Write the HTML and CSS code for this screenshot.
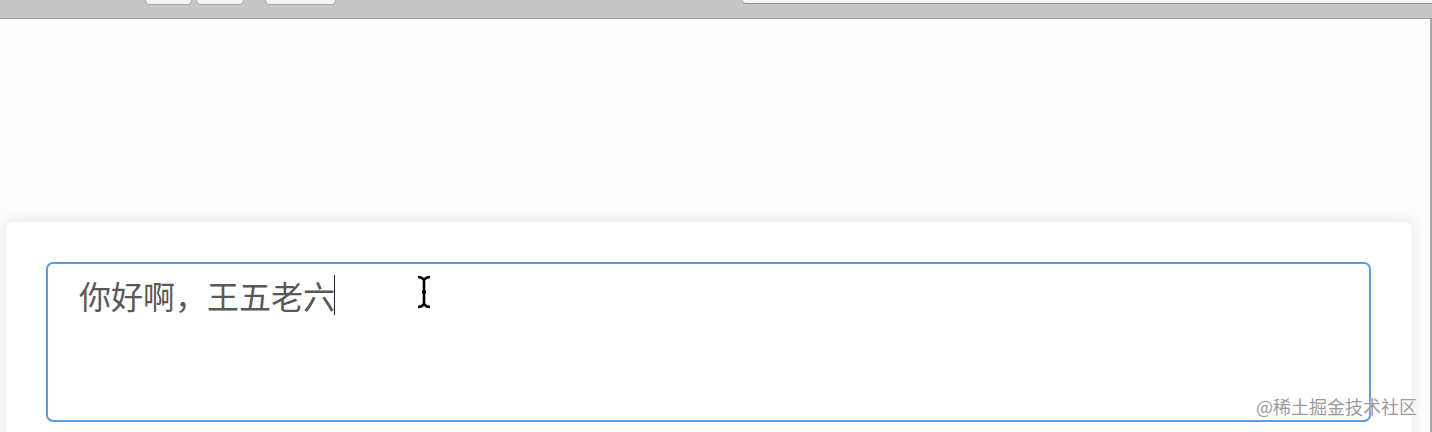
FILE: index.html
```html
<!DOCTYPE html>
<html lang="zh-CN">
<head>
    <meta charset="UTF-8">
    <meta name="viewport" content="width=device-width, initial-scale=1.0">
    <title>输入框</title>
    <link rel="stylesheet" href="styles.css">
</head>
<body>

    <!-- Browser toolbar strip -->
    <div class="toolbar">
        <div class="tool-btn btn-back"></div>
        <div class="tool-btn btn-forward"></div>
        <div class="tool-btn btn-share"></div>
        <div class="address-bar"></div>
    </div>

    <div class="page">
        <div class="content">
            <div class="card">
                <div class="editor">
                    <span class="editor-text">你好啊，王五老六</span><span class="caret"></span>
                </div>
            </div>

            <!-- mouse pointer over the editor -->
            <svg class="pointer" width="16" height="34" viewBox="0 0 16 34">
                <path d="M2 2 Q6 2 8 5 Q10 2 14 2 M8 5 L8 29 M6 17 L10 17 M2 32 Q6 32 8 29 Q10 32 14 32"
                      fill="none" stroke="#000" stroke-width="2.6"/>
            </svg>

            <div class="watermark">@稀土掘金技术社区</div>
        </div>
        <div class="scroll-edge"></div>
    </div>

</body>
</html>
```

FILE: styles.css
```css
html, body {
    margin: 0;
    padding: 0;
    height: 432px;
    overflow: hidden;
    background-color: #fdfdfd;
    font-family: "Noto Sans CJK SC", "Noto Sans", sans-serif;
}

/* Top strip */
.toolbar {
    display: flex;
    align-items: flex-start;
    height: 18px;
    background-color: #c6c6c6;
    border-bottom: 1px solid #9c9c9c;
    padding-left: 145px;
}

.tool-btn {
    height: 4px;
    background-color: #f4f4f4;
    border: 1px solid #a9a9a9;
    border-top: none;
    border-radius: 0 0 5px 5px;
}

.btn-back {
    width: 45px;
}

.btn-forward {
    width: 46px;
    margin-left: 4px;
}

.btn-share {
    width: 69px;
    margin-left: 21px;
}

.address-bar {
    flex: 1;
    height: 3px;
    margin-left: 406px;
    background-color: #f6f6f6;
    border-bottom: 1px solid #8f8f8f;
    border-left: 1px solid #b0b0b0;
    border-radius: 0 0 0 4px;
}

/* Page area */
.page {
    display: flex;
    height: 413px;
}

.content {
    position: relative;
    flex: 1;
    padding-top: 203px;
    overflow: hidden;
}

.scroll-edge {
    width: 2px;
    background-color: #a6a6a6;
}

.card {
    margin-left: 6px;
    width: 1326px;
    height: 300px;
    padding: 40px 40px 0 40px;
    background-color: #fff;
    border-radius: 6px;
    box-shadow: 0 0 12px 3px rgba(0, 0, 0, 0.07);
}

.editor {
    box-sizing: border-box;
    width: 1325px;
    height: 160px;
    padding: 11px 31px;
    border: 2px solid #5c9ddf;
    border-radius: 7px;
    display: flex;
    align-items: flex-start;
}

.editor-text {
    font-size: 32px;
    line-height: 40px;
    color: #585858;
}

.caret {
    display: inline-block;
    width: 1px;
    height: 40px;
    margin-left: -1px;
    background-color: #222;
}

.pointer {
    position: absolute;
    left: 416px;
    top: 256px;
}

.watermark {
    position: absolute;
    left: 1256px;
    top: 376px;
    font-size: 18px;
    line-height: 22px;
    color: #9b9b9b;
    text-shadow: 0 0 2px #fff;
}
```
